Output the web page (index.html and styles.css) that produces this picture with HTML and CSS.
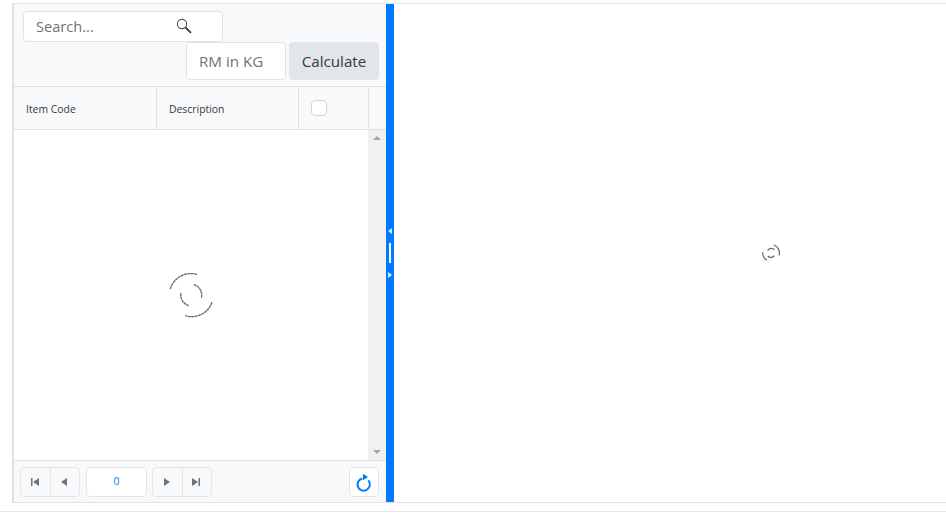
FILE: index.html
```html
<!DOCTYPE html>
<html>
<head>
	<meta charset="utf-8" />
	<title>Items</title>
	<link rel="stylesheet" href="styles.css">
</head>
<body>
	<div class="frame">
		<div class="left-pane">
			<div class="toolbar">
				<div class="search">
					<span class="search-text">Search...</span>
					<svg class="search-icon" width="16" height="16" viewBox="0 0 16 16">
						<circle cx="6" cy="6" r="4.6" fill="none" stroke="#495057" stroke-width="1.1" />
						<path d="M9.5 9.5 L15 14.8" stroke="#343a40" stroke-width="1.8" fill="none" />
					</svg>
				</div>
				<div class="calc-row">
					<div class="rm-input">RM in KG</div>
					<div class="calc-btn">Calculate</div>
				</div>
			</div>
			<div class="grid-head">
				<div class="col col-code">Item Code</div>
				<div class="col col-desc">Description</div>
				<div class="col col-check"><span class="checkbox"></span></div>
				<div class="col-rest"></div>
			</div>
			<div class="grid-body">
				<div class="grid-content">
					<svg width="48" height="48" viewBox="-24 -24 48 48" fill="none" stroke="#666" stroke-width="1.3" stroke-dasharray="3 0.4">
						<path d="M-20.7 -6 A21.5 21.5 0 0 1 6 -20.6" />
						<path d="M21 7.3 A21.5 21.5 0 0 1 -5.7 20.7" />
						<path d="M2.7 -10.3 A10.7 10.7 0 0 1 10.3 3" />
						<path d="M-10 -2 A10.7 10.7 0 0 0 -2.3 10.5" />
					</svg>
				</div>
				<div class="scrollbar">
					<span class="arrow-up"></span>
					<span class="arrow-down"></span>
				</div>
			</div>
			<div class="pager">
				<div class="pager-group">
					<div class="pager-btn">
						<svg width="10" height="10" viewBox="0 0 10 10"><path d="M1 1 H2.5 V9 H1 Z M9 1 V9 L3 5 Z" fill="#6c757d" /></svg>
					</div>
					<div class="pager-btn">
						<svg width="10" height="10" viewBox="0 0 10 10"><path d="M8 1 V9 L2 5 Z" fill="#6c757d" /></svg>
					</div>
				</div>
				<div class="page-input">0</div>
				<div class="pager-group">
					<div class="pager-btn">
						<svg width="10" height="10" viewBox="0 0 10 10"><path d="M2 1 V9 L8 5 Z" fill="#6c757d" /></svg>
					</div>
					<div class="pager-btn">
						<svg width="10" height="10" viewBox="0 0 10 10"><path d="M9 1 H7.5 V9 H9 Z M1 1 V9 L7 5 Z" fill="#6c757d" /></svg>
					</div>
				</div>
				<div class="refresh-btn">
					<svg class="refresh-icon" width="18" height="18" viewBox="0 0 18 18">
						<path d="M13.4 7.4 A6.2 6.2 0 1 1 7.4 5.4" fill="none" stroke="#007bff" stroke-width="2" />
						<path d="M8 0.8 L13 4 L8 7.2 Z" fill="#007bff" />
					</svg>
				</div>
			</div>
		</div>
		<div class="splitter">
			<span class="split-left"></span>
			<span class="split-handle"></span>
			<span class="split-right"></span>
		</div>
		<div class="right-pane">
			<svg width="20" height="20" viewBox="-10 -10 20 20" fill="none" stroke="#666" stroke-width="1.2">
				<path d="M-8.3 -0.8 A8.5 8.5 0 0 0 -4 7.2" />
				<path d="M2.8 -8 A8.5 8.5 0 0 1 8.2 2.4" />
				<path d="M-3.4 -2.4 A4.2 4.2 0 0 1 3.6 -3" />
				<path d="M-3.2 3 A4.2 4.2 0 0 0 3.4 2.6" />
			</svg>
		</div>
	</div>
	<div class="page-line"></div>
</body>
</html>
```

FILE: styles.css
```css
body {
	margin: 0;
	padding-top: 3px;
	background: #fff;
	font-family: "Open Sans", "Noto Sans", sans-serif;
	color: #495057;
}

.frame {
	display: flex;
	height: 498px;
	margin-left: 12px;
	border-top: 1px solid #dee2e6;
	border-bottom: 1px solid #dee2e6;
	border-left: 2px solid #dee2e6;
}

.page-line {
	height: 1px;
	margin-top: 8px;
	background: #e4e6e8;
}

.left-pane {
	display: flex;
	flex-direction: column;
	width: 372px;
	flex: none;
}

.toolbar {
	height: 83px;
	padding: 7px 7px 0 9px;
	box-sizing: border-box;
	background: #f8f9fa;
	border-bottom: 1px solid #dee2e6;
	flex: none;
}

.search {
	display: flex;
	align-items: center;
	justify-content: space-between;
	box-sizing: border-box;
	width: 200px;
	height: 31px;
	padding: 0 30px 2px 12px;
	background: #fff;
	border: 1px solid #dee2e6;
	border-radius: 4px;
	font-size: 14.6px;
	color: #6c757d;
}

.calc-row {
	display: flex;
	justify-content: flex-end;
	gap: 3px;
}

.rm-input {
	display: flex;
	align-items: center;
	box-sizing: border-box;
	width: 100px;
	height: 38px;
	padding-left: 12px;
	background: #fff;
	border: 1px solid #dee2e6;
	border-radius: 4px;
	font-size: 15.2px;
	color: #6c757d;
}

.calc-btn {
	display: flex;
	align-items: center;
	justify-content: center;
	width: 90px;
	height: 38px;
	background: #e2e6ea;
	border-radius: 4px;
	font-size: 15.2px;
	color: #343a40;
}

.grid-head {
	display: flex;
	height: 43px;
	flex: none;
	background: #f8f9fa;
	border-bottom: 1px solid #dee2e6;
	box-sizing: border-box;
	font-size: 10.4px;
	color: #343a40;
}

.col {
	display: flex;
	align-items: center;
	box-sizing: border-box;
	padding: 2px 0 0 12px;
	border-right: 1px solid #dee2e6;
}

.col-code {
	width: 143px;
}

.col-desc {
	width: 142px;
}

.col-check {
	width: 70px;
}

.col-rest {
	flex: 1;
}

.checkbox {
	display: block;
	box-sizing: border-box;
	width: 16px;
	height: 16px;
	margin-top: -2px;
	background: #fff;
	border: 1px solid #ced4da;
	border-radius: 4px;
}

.grid-body {
	display: flex;
	flex: 1;
	min-height: 0;
	background: #fff;
}

.grid-content {
	flex: 1;
	display: flex;
	align-items: center;
	justify-content: center;
}

.scrollbar {
	display: flex;
	flex-direction: column;
	justify-content: space-between;
	align-items: center;
	width: 18px;
	padding: 6px 0;
	box-sizing: border-box;
	background: #f1f1f1;
}

.arrow-up {
	border-left: 4px solid transparent;
	border-right: 4px solid transparent;
	border-bottom: 4px solid #a3a3a3;
}

.arrow-down {
	border-left: 4px solid transparent;
	border-right: 4px solid transparent;
	border-top: 4px solid #a3a3a3;
}

.pager {
	display: flex;
	align-items: center;
	height: 42px;
	flex: none;
	box-sizing: border-box;
	padding: 0 7px 0 6px;
	background: #f8f9fa;
	border-top: 1px solid #dee2e6;
}

.pager-group {
	display: flex;
	width: 60px;
	height: 30px;
	box-sizing: border-box;
	background: #f8f9fa;
	border: 1px solid #e3e6e9;
	border-radius: 4px;
}

.pager-btn {
	display: flex;
	align-items: center;
	justify-content: center;
	flex: 1;
	padding-right: 1px;
}

.pager-btn + .pager-btn {
	border-left: 1px solid #e3e6e9;
}

.page-input {
	width: 61px;
	height: 30px;
	margin: 0 5px 0 6px;
	box-sizing: border-box;
	background: #fff;
	border: 1px solid #e3e6e9;
	border-radius: 4px;
	text-align: center;
	font-size: 10.4px;
	line-height: 26px;
	color: #007bff;
}

.refresh-btn {
	display: flex;
	align-items: center;
	justify-content: center;
	margin-left: auto;
	width: 30px;
	height: 30px;
	box-sizing: border-box;
	background: #fff;
	border: 1px solid #e3e6e9;
	border-radius: 4px;
}

.refresh-icon {
	overflow: visible;
}

.splitter {
	display: flex;
	flex-direction: column;
	align-items: center;
	justify-content: center;
	width: 8px;
	flex: none;
	background: #007bff;
}

.split-handle {
	width: 2px;
	height: 20px;
	margin: 9px 0;
	background: #fff;
}

.split-left {
	border-top: 3px solid transparent;
	border-bottom: 3px solid transparent;
	border-right: 4px solid #dbe9fb;
}

.split-right {
	border-top: 3px solid transparent;
	border-bottom: 3px solid transparent;
	border-left: 4px solid #dbe9fb;
}

.right-pane {
	flex: 1;
	display: flex;
	align-items: center;
	padding-left: 367px;
}
```
